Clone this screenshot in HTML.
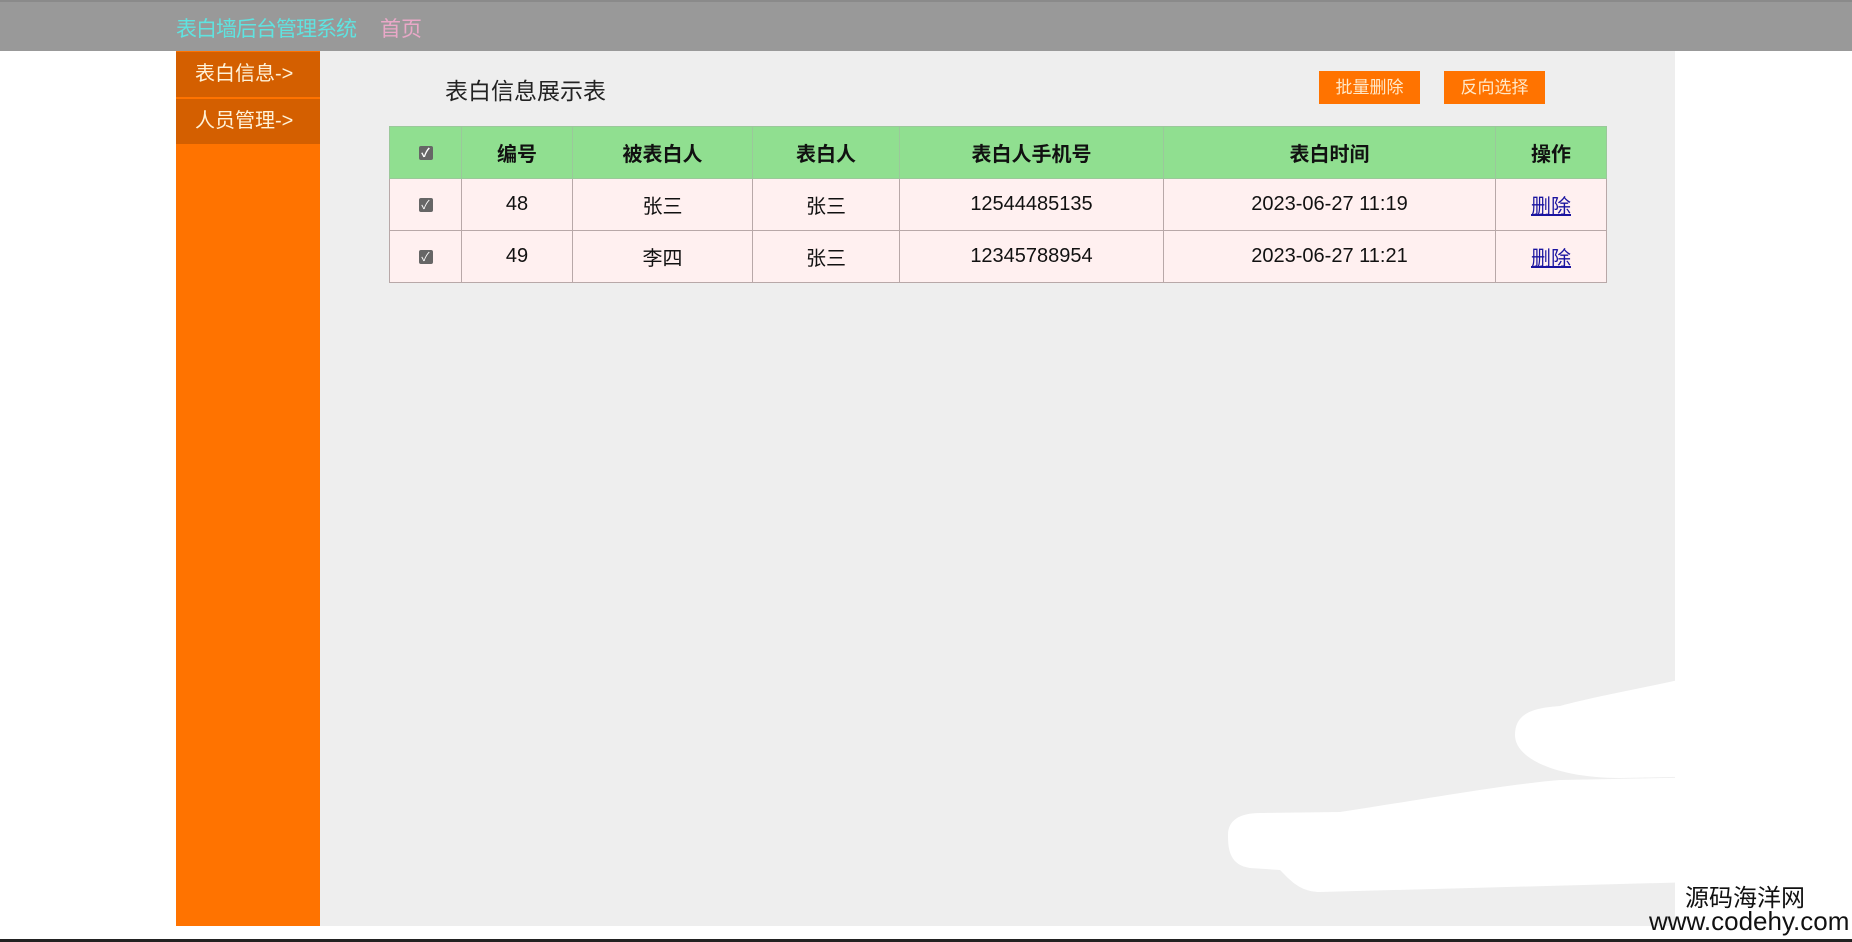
<!DOCTYPE html>
<html><head><meta charset="utf-8"><style>
*{margin:0;padding:0;box-sizing:border-box}
body{width:1852px;height:942px;background:#fff;position:relative;overflow:hidden;font-family:"Liberation Sans","Noto Sans CJK SC",sans-serif}
.hdr{position:absolute;left:0;top:0;width:1852px;height:51px;background:#999;border-top:2px solid #8a8a8a}
.hdr .t{position:absolute;left:176px;top:11px;font-size:21px;color:#5fe3e0;letter-spacing:-1px}
.hdr .h{position:absolute;left:380px;top:11px;font-size:21px;color:#eaa8c8}
.side{position:absolute;left:176px;top:51px;width:144px;height:875px;background:#ff7300}
.side div{position:absolute;left:0;width:144px;height:45px;background:#d45f00;color:#fff2d8;font-size:20px;line-height:45px;padding-left:19px}
.main{position:absolute;left:320px;top:51px;width:1355px;height:875px;background:#eee}
.ttl{position:absolute;left:445px;top:72px;font-size:23px;color:#222}
.btn{position:absolute;top:71px;width:101px;height:33px;background:#ff7300;color:#ffe8c8;font-size:17px;text-align:center;line-height:33px}
table{position:absolute;left:389px;top:126px;width:1218px;border-collapse:collapse;font-size:20px;color:#111}
td,th{border:1px solid #b8a8a8;height:52px;text-align:center}
th{background:#90df90;font-weight:bold;border-color:#9bc89b}
td{background:#fff0f0}
.cb{display:inline-block;width:14px;height:14px;background:#666;border-radius:2px;color:#fff;font-size:12px;line-height:14px;vertical-align:middle}
a{color:#1a14a0;text-decoration:underline}
.wm1{position:absolute;left:1685px;top:885px;font-size:24px;color:#111;line-height:28px}
.wm2{position:absolute;left:1649px;top:906px;font-size:26px;color:#111;line-height:30px}
.line{position:absolute;left:0;top:939px;width:1852px;height:3px;background:#222}
</style></head><body>
<div class="hdr"><span class="t">表白墙后台管理系统</span><span class="h">首页</span></div>
<div class="side"><div style="top:1px">表白信息-&gt;</div><div style="top:48px">人员管理-&gt;</div></div>
<div class="main"></div>
<div class="ttl">表白信息展示表</div>
<div class="btn" style="left:1319px">批量删除</div>
<div class="btn" style="left:1444px">反向选择</div>
<table>
<tr><th style="width:72px"><span class="cb">✓</span></th><th style="width:111px">编号</th><th style="width:180px">被表白人</th><th style="width:147px">表白人</th><th style="width:264px">表白人手机号</th><th style="width:332px">表白时间</th><th>操作</th></tr>
<tr><td><span class="cb">✓</span></td><td>48</td><td>张三</td><td>张三</td><td>12544485135</td><td>2023-06-27 11:19</td><td><a>删除</a></td></tr>
<tr><td><span class="cb">✓</span></td><td>49</td><td>李四</td><td>张三</td><td>12345788954</td><td>2023-06-27 11:21</td><td><a>删除</a></td></tr>
</table>
<svg style="position:absolute;left:0;top:0" width="1852" height="942">
<path fill="#fff" d="M1560 706 C1600 695 1660 685 1700 675 L1772 670 L1772 775 L1620 778 C1560 778 1515 760 1515 735 C1515 712 1535 708 1560 706 Z"/>
<path fill="#fff" d="M1260 813 L1340 812 C1420 800 1500 785 1560 780 L1772 776 L1772 880 L1320 892 C1300 892 1290 880 1280 870 L1250 868 C1230 865 1228 850 1228 835 C1228 820 1240 813 1260 813 Z"/>
</svg>
<div class="wm1">源码海洋网</div>
<div class="wm2">www.codehy.com</div>
<div class="line"></div>
</body></html>
